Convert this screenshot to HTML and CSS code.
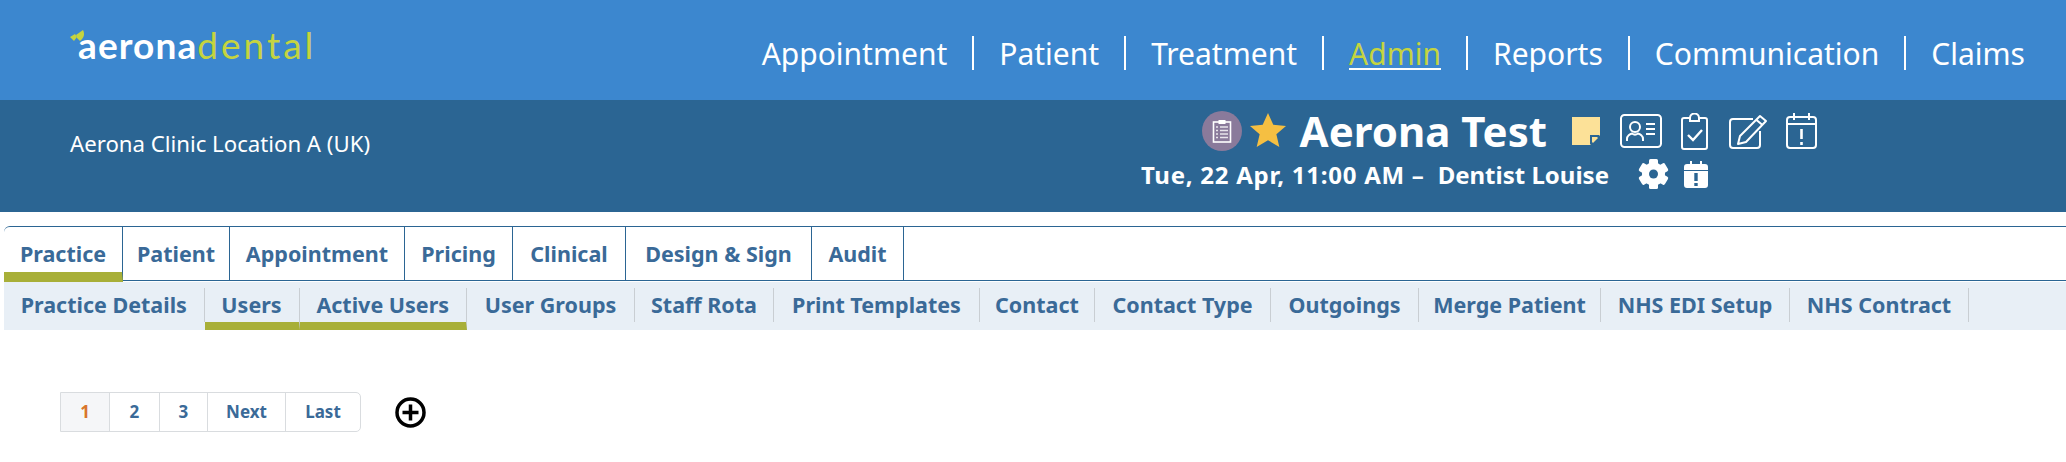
FILE: index.html
```html
<!DOCTYPE html>
<html>

<head>
    <title>Aerona Dental - Users</title>
    <link rel="stylesheet" href="styles.css">
</head>

<body>
    <header class="topbar">
        <a class="logo">
            <svg class="logo-leaf" width="15" height="14" viewBox="0 0 15 14">
                <path d="M0 7l5-3 2 3-3 4z" fill="#c5d43f" />
                <path d="M6 5l7-5c2 4 1 8-3 11l-3-3z" fill="#c5d43f" />
            </svg>
            <span class="logo-a">aerona</span><span class="logo-d">dental</span>
        </a>
        <nav class="mainnav">
            <a>Appointment</a>
            <a>Patient</a>
            <a>Treatment</a>
            <a class="current">Admin</a>
            <a>Reports</a>
            <a>Communication</a>
            <a>Claims</a>
        </nav>
    </header>

    <section class="infobar">
        <div class="location">Aerona Clinic Location A (UK)</div>
        <div class="patient">
            <div class="patient-row">
                <span class="round-icon">
                    <svg width="20" height="24" viewBox="0 0 20 24" fill="none" stroke="#fff">
                        <rect x="1.500" y="3" width="17" height="20" stroke-width="1.600" />
                        <rect x="6.500" y="1" width="7" height="4" fill="#fff" stroke="none" />
                        <path d="M4 8h2M8 8h8M4 11.500h2M8 11.500h8M4 15h2M8 15h8M4 18.500h2M8 18.500h8" stroke-width="1.300" opacity="0.8" />
                    </svg>
                </span>
                <svg class="star" width="36" height="34" viewBox="0 0 34 33" preserveAspectRatio="none">
                    <path d="M17 0l5 11.500 12 1.100-9.100 8 2.800 12.400L17 26.400 6.300 33l2.800-12.400L0 12.600l12-1.100z" fill="#f5bf42" />
                </svg>
                <h1 class="patient-name">Aerona Test</h1>
                <svg class="note" width="28" height="28" viewBox="0 0 28 28">
                    <path d="M0 0h28v18l-10 10H0z" fill="#fce198" />
                    <path d="M19 27v-8h8" fill="none" stroke="#2b6593" stroke-width="2" />
                    <path d="M21 26v-5h5z" fill="#fce198" />
                </svg>
                <svg class="ic-card" width="42" height="34" viewBox="0 0 42 34" fill="none" stroke="#fff" stroke-width="2">
                    <rect x="1" y="1" width="40" height="32" rx="3.500" />
                    <circle cx="15" cy="13" r="5" />
                    <path d="M7 27v-2c0-3 3-5 5-5.500 2 1.500 4 1.500 6 0 2 .5 5 2.500 5 5.500v2M26 10h9M26 15h9M26 20h9" />
                </svg>
                <svg class="ic-clip" width="27" height="37" viewBox="0 0 27 37" fill="none" stroke="#fff" stroke-width="2">
                    <path d="M9 5H3a2 2 0 0 0-2 2v27a2 2 0 0 0 2 2h21a2 2 0 0 0 2-2V7a2 2 0 0 0-2-2h-6" />
                    <path d="M9 8V5a4.500 4.500 0 0 1 9 0v3z" />
                    <path d="M7 22l5 5 9-10" stroke-width="2.400" />
                </svg>
                <svg class="ic-edit" width="39" height="35" viewBox="0 0 39 35" fill="none" stroke="#fff" stroke-width="2">
                    <path d="M24 5H4a3 3 0 0 0-3 3v23a3 3 0 0 0 3 3h24a3 3 0 0 0 3-3V17" />
                    <path d="M31 2l6 5-20 21-8 2 2-8zM27.500 6l6 5" stroke-linejoin="round" />
                </svg>
                <svg class="ic-cal" width="31" height="36" viewBox="0 0 31 36" fill="none" stroke="#fff" stroke-width="2">
                    <rect x="1" y="4" width="29" height="31" rx="3" />
                    <path d="M1 11h29M8 0v7M23 0v7" />
                    <path d="M15.500 16v10M15.500 29v3" stroke-width="2.600" />
                </svg>
            </div>
            <div class="patient-row second">
                <span class="appt">Tue, 22 Apr, 11:00 AM &ndash;</span>
                <span class="dentist">Dentist Louise</span>
                <svg class="ic-gear" width="31" height="30" viewBox="-15.500 -15 31 30">
                    <g fill="#fff">
                        <circle r="11.500" />
                        <rect x="-4.500" y="-15" width="9" height="8" rx="1.500" />
                        <rect x="-4.500" y="-15" width="9" height="8" rx="1.500" transform="rotate(60)" />
                        <rect x="-4.500" y="-15" width="9" height="8" rx="1.500" transform="rotate(120)" />
                        <rect x="-4.500" y="-15" width="9" height="8" rx="1.500" transform="rotate(180)" />
                        <rect x="-4.500" y="-15" width="9" height="8" rx="1.500" transform="rotate(240)" />
                        <rect x="-4.500" y="-15" width="9" height="8" rx="1.500" transform="rotate(300)" />
                    </g>
                    <circle r="4.500" fill="#2b6593" />
                </svg>
                <svg class="ic-calfill" width="24" height="27" viewBox="0 0 24 27">
                    <path fill="#fff" d="M6 0h2v3h8V0h2v3h3a3 3 0 0 1 3 3v3H0V6a3 3 0 0 1 3-3h3zM0 10h24v14a3 3 0 0 1-3 3H3a3 3 0 0 1-3-3z" />
                    <path d="M12 12v8M12 22v3" stroke="#2b6593" stroke-width="3.400" />
                </svg>
            </div>
        </div>
    </section>

    <main class="content">
        <ul class="tabs">
            <li class="active">Practice</li>
            <li>Patient</li>
            <li>Appointment</li>
            <li>Pricing</li>
            <li>Clinical</li>
            <li>Design &amp; Sign</li>
            <li>Audit</li>
        </ul>
        <ul class="subtabs">
            <li>Practice Details</li>
            <li class="active">Users</li>
            <li class="active">Active Users</li>
            <li>User Groups</li>
            <li>Staff Rota</li>
            <li>Print Templates</li>
            <li>Contact</li>
            <li>Contact Type</li>
            <li>Outgoings</li>
            <li>Merge Patient</li>
            <li>NHS EDI Setup</li>
            <li>NHS Contract</li>
        </ul>
        <div class="toolbar">
            <ul class="pager">
                <li class="on">1</li>
                <li>2</li>
                <li>3</li>
                <li>Next</li>
                <li>Last</li>
            </ul>
            <svg class="add" width="31" height="31" viewBox="0 0 31 31" fill="none" stroke="#000">
                <circle cx="15.500" cy="15.500" r="13.500" stroke-width="3.500" />
                <path d="M15.500 7.500v16M7.500 15.500h16" stroke-width="3.500" />
            </svg>
        </div>
    </main>
</body>

</html>
```

FILE: styles.css
```css
html,
body {
    margin: 0;
    padding: 0;
    background-color: white;
    overflow: hidden;
}

body {
    font-family: "Noto Sans", "DejaVu Sans", sans-serif;
}

ul {
    list-style: none;
    margin: 0;
    padding: 0;
}

.topbar {
    height: 100px;
    background-color: #3c87cf;
    display: flex;
    justify-content: space-between;
}

.logo {
    position: relative;
    margin: 27px 0 0 78px;
    font-family: "Lato", sans-serif;
    font-size: 37px;
    line-height: 36px;
    white-space: nowrap;
}

.logo-leaf {
    position: absolute;
    left: -8px;
    top: 3px;
}

.logo-a {
    color: white;
    font-weight: 700;
    letter-spacing: 1.1px;
}

.logo-d {
    color: #c5d43f;
    font-weight: 400;
    letter-spacing: 3px;
}

.mainnav {
    display: flex;
    align-items: flex-start;
    margin: 36px 16px 0 0;
}

.mainnav a {
    height: 34px;
    line-height: 36px;
    padding: 0 25px;
    color: white;
    font-size: 30px;
    border-left: 2px solid white;
}

.mainnav a:first-child {
    border-left: 0;
}

.mainnav a.current {
    color: #c5d43f;
    text-decoration: underline;
    text-decoration-color: white;
    text-decoration-thickness: 2px;
    text-underline-offset: 3px;
}

.infobar {
    height: 112px;
    background-color: #2b6593;
    color: white;
    display: flex;
    justify-content: space-between;
}

.location {
    margin: 31px 0 0 70px;
    font-size: 22.200px;
    line-height: 26px;
}

.patient {
    margin: 11px 249px 0 0;
    display: flex;
    flex-direction: column;
    align-items: flex-end;
}

.patient-row {
    display: flex;
    align-items: center;
    height: 40px;
}

.round-icon {
    width: 40px;
    height: 40px;
    border-radius: 50%;
    background-color: #8a7a9b;
    display: flex;
    align-items: center;
    justify-content: center;
}

.star {
    margin: 0 0 3px 8px;
}

.patient-name {
    margin: 0 25px 0 14px;
    font-size: 42px;
    line-height: 40px;
    font-weight: 700;
    white-space: nowrap;
}

.ic-card {
    margin-left: 20px;
}

.ic-clip {
    margin-left: 19px;
}

.ic-edit {
    margin-left: 21px;
}

.ic-cal {
    margin-left: 18px;
}

.second {
    margin: 8px 109px 0 0;
    height: 30px;
    font-size: 24px;
    font-weight: 700;
    white-space: nowrap;
}

.appt {
    letter-spacing: 0.75px;
}

.dentist {
    margin-left: 13px;
}

.ic-gear {
    margin-left: 29px;
}

.ic-calfill {
    margin-left: 15px;
}

.content {
    margin: 14px 0 0 4px;
}

.tabs {
    display: grid;
    grid-template-columns: 119px 107px 175px 108px 113px 186px 92px 1fr;
    box-sizing: border-box;
    height: 55px;
    margin-bottom: 1px;
    border-top: 1px solid #2b6593;
    border-bottom: 1px solid #2b6593;
    border-top-left-radius: 6px;
}

.tabs li {
    box-sizing: border-box;
    height: 53px;
    line-height: 53px;
    text-align: center;
    font-size: 21.500px;
    font-weight: 700;
    color: #3a6a98;
    border-right: 1px solid #2b6593;
}

.tabs li.active {
    height: 55px;
    border-bottom: 10px solid #a8af38;
}

.subtabs {
    display: grid;
    grid-template-columns: 200.500px 95px 167.500px 168px 139px 206px 115px 176px 148px 182px 189px 179px 1fr;
    height: 48px;
    background-color: #e8eff6;
    align-items: start;
    padding-top: 6px;
    box-sizing: border-box;
}

.subtabs li {
    box-sizing: border-box;
    height: 34px;
    line-height: 34px;
    text-align: center;
    font-size: 21.500px;
    font-weight: 700;
    color: #3a6a98;
    border-right: 1px solid #c9ced3;
}

.subtabs li.active {
    height: 42px;
    border-bottom: 8px solid #a8af38;
}

.toolbar {
    display: flex;
    align-items: center;
    margin: 62px 0 0 56px;
}

.pager {
    display: grid;
    grid-template-columns: 49px 49.500px 48.500px 78px 74px;
    height: 40px;
    box-sizing: border-box;
    border: 1px solid #d9dcdf;
    border-radius: 0 5px 5px 0;
}

.pager li {
    text-align: center;
    line-height: 38px;
    font-size: 17px;
    font-weight: 700;
    color: #3a6a98;
    border-right: 1px solid #d9dcdf;
}

.pager li:last-child {
    border-right: 0;
}

.pager li.on {
    background-color: #f5f6f8;
    color: #d9752b;
}

.add {
    margin-left: 34px;
}
```
